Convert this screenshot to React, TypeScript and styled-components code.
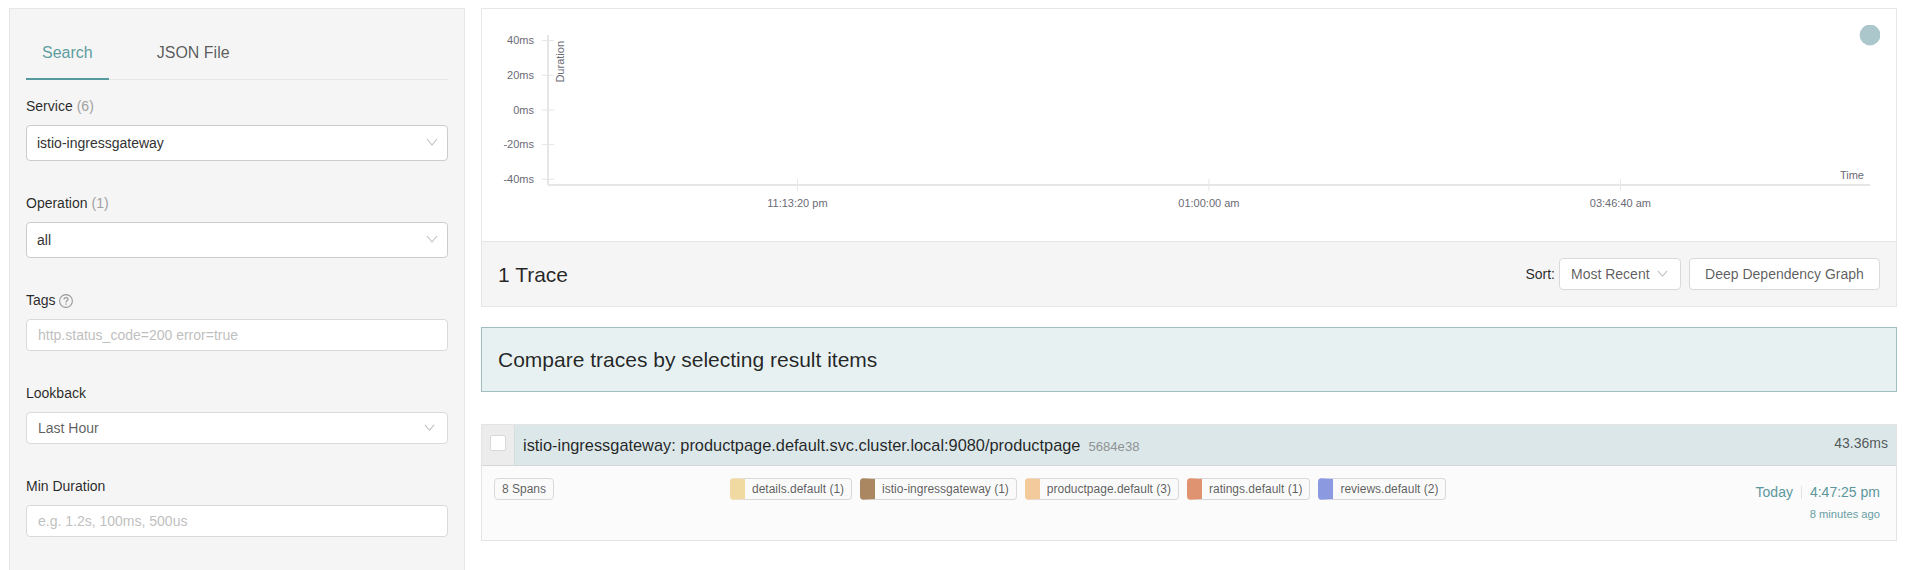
import React from 'react';
import styled, { createGlobalStyle } from 'styled-components';

const GlobalStyle = createGlobalStyle`
  *, *::before, *::after { box-sizing: border-box; }
  body {
    margin: 0;
    background: #fff;
    color: rgba(0, 0, 0, 0.85);
    font: 14px/21px "Liberation Sans", Arial, sans-serif;
    overflow: hidden;
  }
  h2, h3 { margin: 0; font-weight: 400; }
`;

const Page = styled.div`
  display: flex;
  gap: 16px;
  height: 570px;
  padding: 8px 12px 0 9px;
  overflow: hidden;
`;

const Sidebar = styled.aside`
  flex: none;
  width: 456px;
  height: 640px;
  padding: 16px;
  background: #f5f5f5;
  border: 1px solid #e6e6e6;
`;

const Tabs = styled.nav`
  display: flex;
  gap: 32px;
  height: 55px;
  border-bottom: 1px solid #e8e8e8;
`;

const Tab = styled.span<{ $active?: boolean }>`
  height: 55px;
  padding: 16px 16px 0;
  font-size: 16px;
  line-height: 24px;
  color: ${p => (p.$active ? '#5f9ea0' : 'rgba(0, 0, 0, 0.65)')};
  border-bottom: 2px solid ${p => (p.$active ? '#569a9e' : 'transparent')};
`;

const Form = styled.form`
  display: flex;
  flex-direction: column;
  gap: 32px;
  padding-top: 16px;
`;

const Field = styled.div`
  display: flex;
  flex-direction: column;
  gap: 8px;
`;

const Label = styled.label`
  display: flex;
  align-items: center;
  gap: 4px;
  height: 21px;
`;

const Count = styled.span`
  color: #a0a0a0;
`;

const Control = styled.div<{ $tall?: boolean; $placeholder?: boolean }>`
  display: flex;
  align-items: center;
  justify-content: space-between;
  height: ${p => (p.$tall ? 36 : 32)}px;
  padding: ${p => (p.$tall ? '0 9px 0 10px' : '0 12px 0 11px')};
  color: ${p => (p.$placeholder ? '#bfbfbf' : p.$tall ? '#333' : 'rgba(0, 0, 0, 0.65)')};
  background: #fff;
  border: 1px solid ${p => (p.$tall ? '#ccc' : '#d9d9d9')};
  border-radius: 4px;
`;

const Main = styled.main`
  flex: 1;
  min-width: 0;
`;

const Summary = styled.section`
  border: 1px solid #e6e6e6;
`;

const Plot = styled.div`
  height: 232px;
  padding: 16px;
  svg { display: block; }
`;

const SummaryBar = styled.div`
  display: flex;
  align-items: center;
  height: 65px;
  padding: 0 16px;
  background: #f5f5f5;
  border-top: 1px solid #e6e6e6;
`;

const Heading = styled.h2<{ $lowered?: boolean }>`
  flex: 1;
  padding-top: ${p => (p.$lowered ? 2 : 0)}px;
  font-size: 21px;
  line-height: 32px;
`;

const SortSelect = styled.div`
  display: flex;
  align-items: center;
  justify-content: space-between;
  width: 122px;
  height: 32px;
  margin: 0 8px 0 4px;
  padding: 0 12px 0 11px;
  color: rgba(0, 0, 0, 0.65);
  background: #fff;
  border: 1px solid #d9d9d9;
  border-radius: 4px;
`;

const Button = styled.button`
  width: 191px;
  height: 32px;
  padding: 0;
  font: inherit;
  color: rgba(0, 0, 0, 0.65);
  background: #fff;
  border: 1px solid #d9d9d9;
  border-radius: 4px;
`;

const Compare = styled.section`
  display: flex;
  align-items: center;
  height: 65px;
  margin-top: 20px;
  padding: 0 16px;
  background: #e8f1f2;
  border: 1px solid #9fbfc0;
`;

const Result = styled.article`
  height: 117px;
  margin-top: 32px;
  background: #fbfbfb;
  border: 1px solid #e4e4e4;
`;

const ResultHeader = styled.header`
  display: flex;
  height: 41px;
  background: #dce7e9;
  border-bottom: 1px solid #d5d8d9;
`;

const CheckCell = styled.div`
  width: 33px;
  padding: 10px 8px;
  background: #ececec;
  border-right: 1px solid #d9dddd;
`;

const Checkbox = styled.span`
  display: block;
  width: 16px;
  height: 16px;
  background: #fff;
  border: 1px solid #d9d9d9;
  border-radius: 2px;
`;

const Title = styled.h3`
  flex: 1;
  padding: 8px 0 0 8px;
  font-size: 16.38px;
  line-height: 25px;
`;

const TraceId = styled.small`
  margin-left: 8px;
  font-size: 13.1px;
  color: #8e9394;
`;

const Duration = styled.span`
  padding: 8px 8px 0 0;
  color: rgba(0, 0, 0, 0.65);
`;

const ResultBody = styled.div`
  display: flex;
  align-items: flex-start;
  padding: 12px 16px 0 12px;
`;

const SpanColumn = styled.div`
  width: 236px;
`;

const TagList = styled.div`
  display: flex;
  flex: 1;
  gap: 8px;
`;

const Tag = styled.span<{ $color?: string }>`
  display: inline-block;
  height: 22px;
  padding: 0 7px;
  font-size: 12px;
  line-height: 20px;
  color: rgba(0, 0, 0, 0.65);
  white-space: nowrap;
  background: #fafafa;
  border: 1px solid #d9d9d9;
  border-radius: 4px;
  ${p => p.$color && `border-left: 15px solid ${p.$color};`}
`;

const When = styled.div`
  display: flex;
  flex-direction: column;
  align-items: flex-end;
  padding-top: 4px;
  color: #5b979c;
`;

const StartTime = styled.div`
  display: flex;
  align-items: center;
  height: 21px;
`;

const Divider = styled.i`
  width: 1px;
  height: 13px;
  margin: 0 8px;
  background: #e0e4e4;
`;

const Ago = styled.small`
  font-size: 11.2px;
  line-height: 22px;
  color: #69a0a4;
`;

const Chevron = ({ size = 12 }: { size?: number }) => (
  <svg width={size} height={size} viewBox="0 0 12 12" fill="none" stroke="#bfbfbf" strokeWidth="1.1">
    <path d="M1 2 6 8 11 2" />
  </svg>
);

const HelpMark = styled.svg`
  margin-left: -1px;
`;

const HelpIcon = () => (
  <HelpMark width="14" height="14" viewBox="0 0 14 14" fill="none" stroke="#999">
    <circle cx="7" cy="7" r="6.4" strokeWidth="1.1" />
    <path d="M5 5.6c0-1.2.8-1.9 2-1.9s2 .7 2 1.7C9 6.9 7 6.8 7 8.5" strokeWidth="1.2" />
    <path d="M7 9.5v1.2" strokeWidth="1.3" />
  </HelpMark>
);

const yTicks = [
  { label: '40ms', y: 15.5 },
  { label: '20ms', y: 50.3 },
  { label: '0ms', y: 85 },
  { label: '-20ms', y: 119.6 },
  { label: '-40ms', y: 154.3 },
];

const xTicks = [
  { label: '11:13:20 pm', x: 299.4 },
  { label: '01:00:00 am', x: 710.9 },
  { label: '03:46:40 am', x: 1122.4 },
];

const ScatterPlot = () => (
  <svg width="1382" height="200" fontSize="11" fill="#6b6b76">
    <g stroke="#e6e6e9" strokeWidth="2">
      <path d="M50 160H1372M50 10V160" />
      {yTicks.map(t => <path key={t.label} d={`M44 ${t.y}H56`} strokeWidth="1" />)}
      {xTicks.map(t => <path key={t.label} d={`M${t.x} 154V166`} strokeWidth="1" />)}
    </g>
    {yTicks.map(t => <text key={t.label} x="36" y={t.y + 3.5} textAnchor="end">{t.label}</text>)}
    {xTicks.map(t => <text key={t.label} x={t.x} y="182" textAnchor="middle">{t.label}</text>)}
    <text x="1366" y="154" textAnchor="end">Time</text>
    <text transform="translate(66 16) rotate(-90)" textAnchor="end">Duration</text>
    <circle cx="1372" cy="10" r="10.4" fill="#abc7cb" />
  </svg>
);

const services = [
  { name: 'details.default', count: 1, color: '#f0daa1' },
  { name: 'istio-ingressgateway', count: 1, color: '#aa8661' },
  { name: 'productpage.default', count: 3, color: '#f2ca9b' },
  { name: 'ratings.default', count: 1, color: '#e09371' },
  { name: 'reviews.default', count: 2, color: '#8b9ae0' },
];

export default function App() {
  return (
    <>
      <GlobalStyle />
      <Page>
        <Sidebar>
          <Tabs>
            <Tab $active>Search</Tab>
            <Tab>JSON File</Tab>
          </Tabs>
          <Form>
            <Field>
              <Label>Service <Count>(6)</Count></Label>
              <Control $tall>istio-ingressgateway<Chevron /></Control>
            </Field>
            <Field>
              <Label>Operation <Count>(1)</Count></Label>
              <Control $tall>all<Chevron /></Control>
            </Field>
            <Field>
              <Label>Tags <HelpIcon /></Label>
              <Control $placeholder>http.status_code=200 error=true</Control>
            </Field>
            <Field>
              <Label>Lookback</Label>
              <Control>Last Hour<Chevron size={11} /></Control>
            </Field>
            <Field>
              <Label>Min Duration</Label>
              <Control $placeholder>e.g. 1.2s, 100ms, 500us</Control>
            </Field>
          </Form>
        </Sidebar>
        <Main>
          <Summary>
            <Plot><ScatterPlot /></Plot>
            <SummaryBar>
              <Heading $lowered>1 Trace</Heading>
              <span>Sort:</span>
              <SortSelect>Most Recent<Chevron size={11} /></SortSelect>
              <Button type="button">Deep Dependency Graph</Button>
            </SummaryBar>
          </Summary>
          <Compare><Heading>Compare traces by selecting result items</Heading></Compare>
          <Result>
            <ResultHeader>
              <CheckCell><Checkbox /></CheckCell>
              <Title>
                istio-ingressgateway: productpage.default.svc.cluster.local:9080/productpage
                <TraceId>5684e38</TraceId>
              </Title>
              <Duration>43.36ms</Duration>
            </ResultHeader>
            <ResultBody>
              <SpanColumn><Tag>8 Spans</Tag></SpanColumn>
              <TagList>
                {services.map(s => <Tag key={s.name} $color={s.color}>{s.name} ({s.count})</Tag>)}
              </TagList>
              <When>
                <StartTime>Today<Divider />4:47:25 pm</StartTime>
                <Ago>8 minutes ago</Ago>
              </When>
            </ResultBody>
          </Result>
        </Main>
      </Page>
    </>
  );
}
